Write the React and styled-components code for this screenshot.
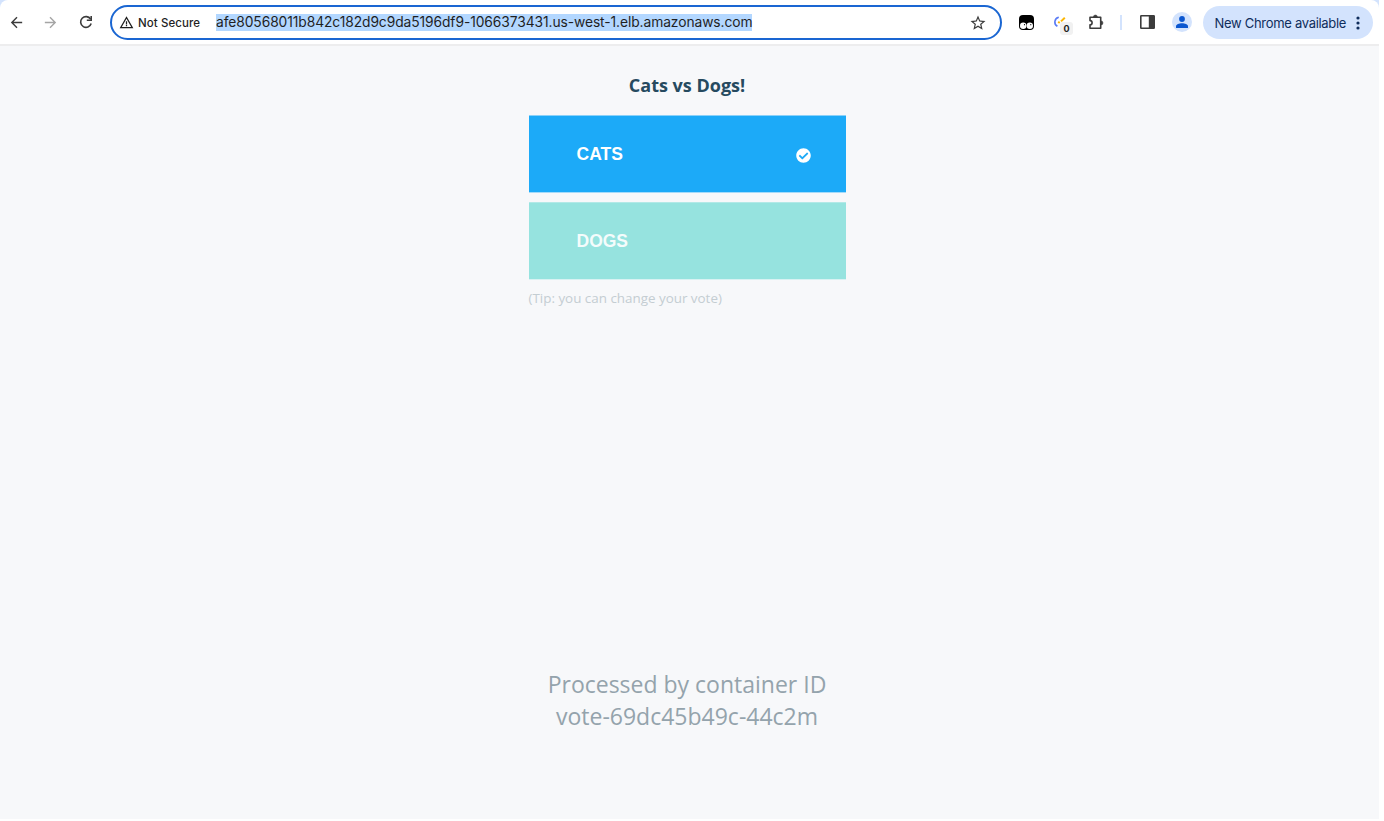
import React from "react";
import styled, { createGlobalStyle } from "styled-components";
import { MdArrowBack, MdArrowForward, MdStarOutline, MdWarningAmber } from "react-icons/md";
import { FaCheckCircle } from "react-icons/fa";

const GlobalStyle = createGlobalStyle`
  * { box-sizing: border-box; }
  body { margin: 0; background: #fff; overflow: hidden; }
`;

const Window = styled.div`
  width: 1379px;
  height: 819px;
  display: flex;
  flex-direction: column;
  background: #d3e3fd;
`;

const Toolbar = styled.header`
  height: 46px;
  flex: none;
  display: flex;
  align-items: flex-start;
  padding-top: 5px;
  background: #fff;
  border-bottom: 2px solid #ededee;
  border-radius: 8px 8px 0 0;
  font-family: Inter, "Liberation Sans", sans-serif;
`;

const Slot = styled.div`
  width: ${(p) => p.$w}px;
  height: 34px;
  flex: none;
  display: flex;
  align-items: center;
  justify-content: center;
  color: ${(p) => p.$color || "#3c3c3c"};
  svg { display: block; }
`;

const AddressBar = styled.div`
  width: 892px;
  height: 35px;
  flex: none;
  display: flex;
  align-items: center;
  padding: 0 13px 0 7px;
  border: 2px solid #1a66d2;
  border-radius: 18px;
  color: #1f1f1f;
`;

const Security = styled.span`
  width: 78px;
  margin-left: 4px;
  font-size: 11.5px;
  font-weight: 500;
  letter-spacing: 0.08px;
  white-space: nowrap;
`;

const Url = styled.span`
  height: 17px;
  width: 536px;
  line-height: 17px;
  background: #b3d7ff;
  font-size: 13.8px;
  letter-spacing: -0.075px;
  white-space: nowrap;
`;

const Star = styled(MdStarOutline)`
  margin-left: auto;
  color: #3c3c3c;
`;

const Divider = styled.div`
  width: 2px;
  height: 15px;
  margin: 10px 0;
  background: #d3e3fd;
`;

const Extension = styled.div`
  position: relative;
  width: 20px;
  height: 26px;
`;

const Count = styled.span`
  position: absolute;
  left: 8px;
  top: 13px;
  width: 13px;
  height: 13px;
  border-radius: 3px;
  background: #f1f1f1;
  color: #1f1f1f;
  font-size: 9px;
  font-weight: 700;
  line-height: 13px;
  text-align: center;
`;

const Avatar = styled.div`
  width: 20px;
  height: 20px;
  display: grid;
  place-items: center;
  border-radius: 50%;
  background: #d3e3fd;
  color: #0b57d0;
`;

const UpdatePill = styled.div`
  width: 170px;
  height: 33px;
  margin: 1px 0 0 4px;
  display: flex;
  align-items: center;
  justify-content: space-between;
  padding: 0 13px 0 11.5px;
  border-radius: 17px;
  background: #d3e3fd;
  color: #0f2d5c;
  font-size: 13px;
  letter-spacing: -0.3px;
  white-space: nowrap;
`;

const Page = styled.main`
  flex: 1;
  display: flex;
  flex-direction: column;
  align-items: center;
  padding-right: 5px;
  background: #f7f8fa;
  font-family: "Open Sans", sans-serif;
`;

const Title = styled.h1`
  margin: 26px 0 18px;
  font-size: 18px;
  line-height: 26px;
  font-weight: 700;
  color: #264a5f;
`;

const Choices = styled.div`
  width: 317px;
  display: flex;
  flex-direction: column;
  gap: 11px;
`;

const Choice = styled.button`
  height: 76px;
  padding: 0 35px 0 48px;
  display: flex;
  align-items: center;
  justify-content: space-between;
  border: 0;
  background: ${(p) => (p.$active ? "#1caaf8" : "#96e3df")};
  box-shadow: 0 1px ${(p) => (p.$active ? "#a5dbfa" : "#d8f2f3")}, 0 -1px ${(p) => (p.$active ? "#8bd1f9" : "#b2e9e7")};
  color: ${(p) => (p.$active ? "#fff" : "#f4fcfc")};
  font: 700 17.5px "Liberation Sans", Arial, sans-serif;
  text-align: left;
  svg { margin-top: 3px; }
`;

const Tip = styled.p`
  width: 317px;
  margin: 10px 0 0;
  font-size: 13.4px;
  line-height: 18px;
  color: #c4cdd2;
`;

const Container = styled.footer`
  margin-top: 362px;
  text-align: center;
  font-size: 23px;
  line-height: 31.5px;
  color: #94a3ac;
`;

export default function App() {
  return (
    <>
      <GlobalStyle />
      <Window>
        <Toolbar>
          <Slot $w={33}><MdArrowBack size={17} /></Slot>
          <Slot $w={35} $color="#a5a5a5"><MdArrowForward size={17} /></Slot>
          <Slot $w={36}>
            <svg width="14" height="14" viewBox="0 0 14 14" fill="none" stroke="currentColor" strokeWidth="1.6">
              <path d="M12.2 8.6A5.4 5.4 0 1 1 11.6 4.1" />
              <path d="M12.2 1v4.3H7.8" />
            </svg>
          </Slot>
          <Slot $w={6} />
          <AddressBar>
            <MdWarningAmber size={15} />
            <Security>Not Secure</Security>
            <Url>afe80568011b842c182d9c9da5196df9-1066373431.us-west-1.elb.amazonaws.com</Url>
            <Star size={18} />
          </AddressBar>
          <Slot $w={48}>
            <svg width="15" height="15" viewBox="0 0 15 15">
              <rect width="15" height="15" rx="4" fill="#000" />
              <circle cx="4.2" cy="10.8" r="3.2" fill="#fff" />
              <circle cx="10.8" cy="10.8" r="3.2" fill="#fff" />
              <circle cx="5.5" cy="9.7" r=".6" fill="#000" />
              <circle cx="11.8" cy="9.7" r=".6" fill="#000" />
            </svg>
          </Slot>
          <Slot $w={24}>
            <Extension>
              <svg width="14" height="20" viewBox="0 0 14 20" fill="none" strokeWidth="1.6">
                <path d="M6.8 8.2A4.9 4.9 0 0 0 5.4 17.3" stroke="#5b7cf5" />
                <path d="M6.2 12.8l1.5 1.2M9 12.4l3.8-3.7" stroke="#fbb605" strokeWidth="2" />
              </svg>
              <Count>0</Count>
            </Extension>
          </Slot>
          <Slot $w={45}>
            <svg width="17" height="17" viewBox="0 0 17 17">
              <path d="M2 3.3h10.7v10.9H2v-3.4a2.1 2.1 0 0 0 0-4.2z" fill="none" stroke="currentColor" strokeWidth="1.6" strokeLinejoin="round" />
              <path d="M5.4 3a2 2 0 0 1 4 0zM13 6.9a2 2 0 0 1 0 4z" fill="currentColor" stroke="currentColor" strokeWidth=".5" />
            </svg>
          </Slot>
          <Slot $w={1} />
          <Divider />
          <Slot $w={50}>
            <svg width="15" height="14" viewBox="0 0 15 14">
              <rect x=".8" y=".8" width="13.4" height="12.4" rx=".5" fill="none" stroke="currentColor" strokeWidth="1.6" />
              <path d="M8.8 1H14v12H8.8z" fill="currentColor" />
            </svg>
          </Slot>
          <Slot $w={20}>
            <Avatar>
              <svg width="12" height="12" viewBox="0 0 12 12" fill="currentColor">
                <circle cx="6" cy="3" r="2.9" />
                <path d="M0 12v-1.7C0 8.2 3.2 7.2 6 7.2s6 1 6 3.1V12z" />
              </svg>
            </Avatar>
          </Slot>
          <Slot $w={7} />
          <UpdatePill>
            <span>New Chrome available</span>
            <svg width="4" height="14" viewBox="0 0 4 14" fill="currentColor">
              <circle cx="2" cy="2" r="1.6" />
              <circle cx="2" cy="7" r="1.6" />
              <circle cx="2" cy="12" r="1.6" />
            </svg>
          </UpdatePill>
        </Toolbar>
        <Page>
          <Title>Cats vs Dogs!</Title>
          <Choices>
            <Choice $active>CATS<FaCheckCircle size={15} /></Choice>
            <Choice>DOGS</Choice>
          </Choices>
          <Tip>(Tip: you can change your vote)</Tip>
          <Container>Processed by container ID<br />vote-69dc45b49c-44c2m</Container>
        </Page>
      </Window>
    </>
  );
}
